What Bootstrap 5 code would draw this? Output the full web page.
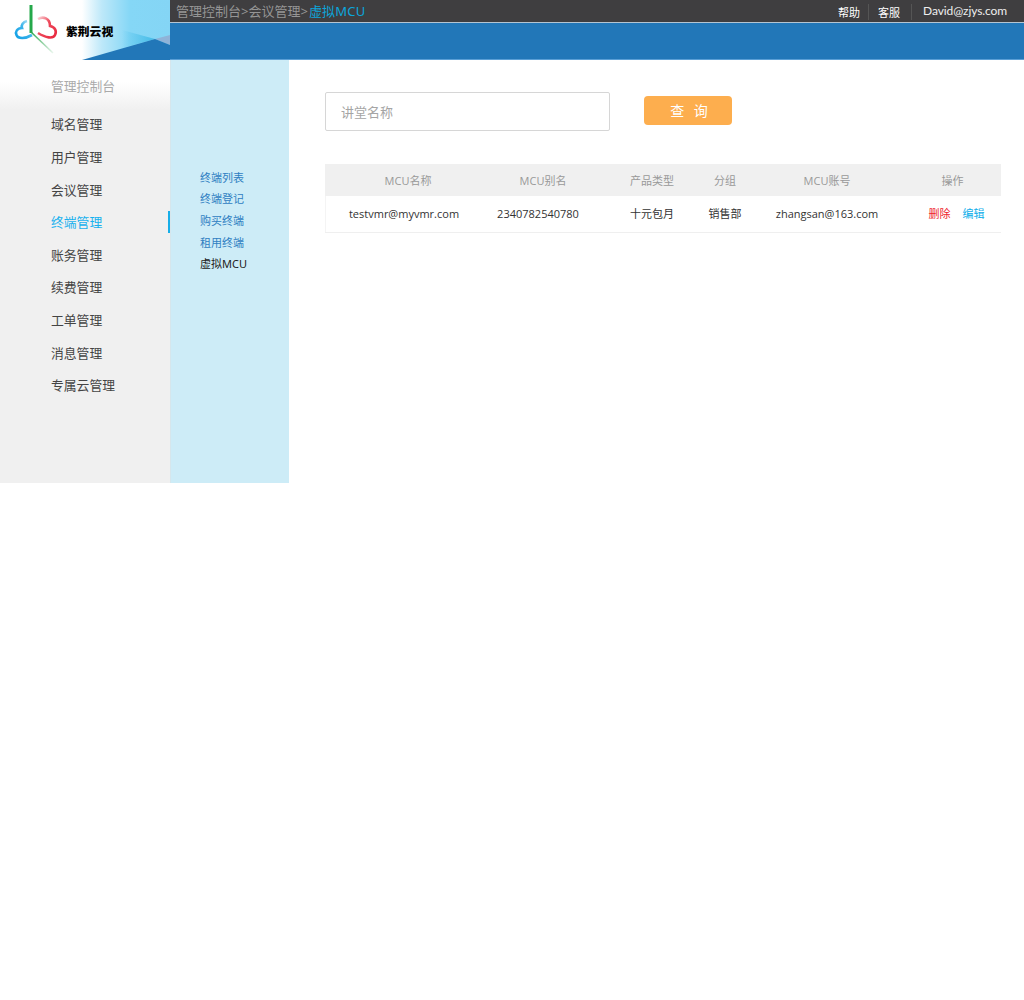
<!DOCTYPE html>
<html lang="zh-CN">
<head>
  <meta charset="UTF-8" />
  <meta name="viewport" content="width=device-width, initial-scale=1.0" />
  <title>虚拟MCU</title>
  <link href="https://cdn.jsdelivr.net/npm/bootstrap@5.3.0/dist/css/bootstrap.min.css" rel="stylesheet" />
  <style>
    body {
      font-family: "Open Sans", "Noto Sans CJK SC", sans-serif;
      font-size: 11px;
      color: #333;
      background: #fff;
    }
    /* header */
    .top-head { height: 60px; }
    .logo-box {
      width: 170px;
      position: relative;
      background: linear-gradient(90deg, #fff 82px, #bde8f9 102px, #85d7f6 130px, #84d5f5 170px);
      overflow: hidden;
    }
    .logo-decor { position: absolute; left: 0; top: 0; }
    .logo-name {
      position: absolute;
      left: 66px;
      top: 22px;
      font-family: "Noto Sans CJK SC", sans-serif;
      font-size: 11.8px;
      font-weight: 900;
      line-height: 18px;
      color: #000;
    }
    .head-right { flex: 1; }
    .crumb-bar {
      height: 23px;
      background: #3f3e40;
      border-bottom: 1px solid #b4c5d3;
      padding: 0 17px 0 6px;
    }
    .crumb {
      font-size: 13px;
      line-height: 22px;
      color: #959595;
      font-family: "Noto Sans", "Noto Sans CJK SC", sans-serif;
    }
    .crumb-now { color: #0ca6dc; letter-spacing: .2px; margin-left: 1px; }
    .bar-link { color: #fff; font-size: 11px; line-height: 22px; padding-top: 1px; font-family: "Noto Sans CJK SC", sans-serif; }
    .bar-sep { width: 1px; height: 16px; background: #555; margin: 2px 9px 0 8px; }
    .bar-sep-2 { margin: 2px 11px 0 11px; }
    .bar-mail { font-family: Lato, sans-serif; font-size: 12px; letter-spacing: -.1px; color: #eee; }
    .blue-bar {
      height: 37px;
      background: #2277b8;
      border-bottom: 1px solid #5a9fd6;
    }
    /* side menus */
    .side-wrap { height: 423px; }
    .main-menu {
      width: 170px;
      padding: 17px 0 0 51px;
      background: linear-gradient(180deg, #fff 0, #fff 22px, #f0f0f0 50px);
    }
    .menu-title { font-size: 12.8px; line-height: 18px; color: #aaa; margin-bottom: 13.4px; font-family: "Noto Sans CJK SC", sans-serif; }
    .main-link {
      position: relative;
      font-size: 12.8px;
      line-height: 32.6px;
      color: #444;
      padding: 0;
      font-family: "Noto Sans CJK SC", sans-serif;
    }
    .main-link:hover { color: #444; }
    .main-link.on { color: #17b1ee; }
    .main-link.on::after {
      content: "";
      position: absolute;
      left: 117px;
      top: 5px;
      width: 2px;
      height: 22px;
      background: #17aee8;
    }
    .sub-menu {
      width: 119px;
      padding: 106.5px 0 0 29px;
      background: #cdecf7;
      border-left: 1px solid #d6e6ec;
    }
    .sub-link {
      font-size: 11px;
      line-height: 21.75px;
      color: #2f80c2;
      padding: 0;
      font-family: "Noto Sans CJK SC", sans-serif;
    }
    .sub-link:hover { color: #2f80c2; }
    .sub-link.on { color: #222; margin-top: -1px; font-family: "Noto Sans", "Noto Sans CJK SC", sans-serif; }
    /* content */
    .content-box { padding: 32px 0 0 36px; width: 712px; }
    .search-input {
      width: 285px;
      height: 39px;
      border: 1px solid #d6d6d6;
      border-radius: 2px;
      padding: 0 15px;
      font-size: 13px;
      color: #333;
    }
    .search-input::placeholder { color: #a5a5a5; }
    .search-btn {
      width: 88px;
      height: 29px;
      margin: 4px 0 0 34px;
      padding: 0 0 0 2px;
      background: #fdae4e;
      border: 0;
      border-radius: 4px;
      color: #fff;
      font-size: 14px;
      line-height: 29px;
      word-spacing: 1.5px;
      font-family: "Noto Sans CJK SC", sans-serif;
    }
    .search-btn:hover { background: #fdae4e; color: #fff; }
    .mcu-table {
      width: 676px;
      table-layout: fixed;
      margin: 33px 0 0;
      font-size: 11px;
    }
    .mcu-table th {
      height: 32px;
      padding: 3px 0 0;
      background: #f0f0f0;
      color: #999;
      font-weight: 400;
      text-align: center;
      vertical-align: middle;
      border: 0;
    }
    .mcu-table td {
      height: 36px;
      padding: 0;
      color: #333;
      text-align: center;
      vertical-align: middle;
      border-bottom: 1px solid #efefef;
    }
    .mcu-table td.first-col { padding-left: 11px; box-shadow: inset 1px 0 0 #f4f4f4; }
    .mcu-table th.first-col { padding-left: 19px; }
    .mcu-table th.second-col { padding-left: 10px; }
    .row-ops { padding-left: 8px; gap: 12px; }
    .op-del { color: #ee1c2e; text-decoration: none; }
    .op-edit { color: #10aeea; text-decoration: none; }
  </style>
</head>
<body>
<header class="top-head d-flex">
  <div class="logo-box">
    <svg class="logo-decor" width="170" height="60" viewBox="0 0 170 60">
      <defs>
        <linearGradient id="bandFade" x1="0" x2="1" y1="0" y2="0">
          <stop offset="0" stop-color="#45bce8" stop-opacity="0" />
          <stop offset="1" stop-color="#45bce8" />
        </linearGradient>
        <linearGradient id="stemFade" x1="0" x2="1" y1="0" y2="1">
          <stop offset="0" stop-color="#2fa84f" />
          <stop offset="1" stop-color="#2fa84f" stop-opacity=".1" />
        </linearGradient>
        <linearGradient id="blueFade" x1="0" x2="1" y1="1" y2="0">
          <stop offset="0" stop-color="#12a0e6" />
          <stop offset=".55" stop-color="#3cb4ea" />
          <stop offset="1" stop-color="#3cb4ea" stop-opacity=".25" />
        </linearGradient>
        <linearGradient id="redFade" x1="1" x2="0" y1="1" y2="0">
          <stop offset="0" stop-color="#e8283e" />
          <stop offset=".6" stop-color="#ee4a5c" />
          <stop offset="1" stop-color="#ee4a5c" stop-opacity=".25" />
        </linearGradient>
      </defs>
      <polygon points="122,30 155,39 122,48" fill="url(#bandFade)" />
      <polygon points="155,39 170,35 170,45" fill="#8fb3d8" />
      <polygon points="82,60 155,39 170,45 170,60" fill="#2277b8" />
      <path d="M31 5V33" stroke="#25a84a" stroke-width="3" fill="none" />
      <path d="M31 32L53 53" stroke="url(#stemFade)" stroke-width="1.6" fill="none" />
      <path d="M27 21C23 22 21 25 22 28C17 28 15 32 16.500 35C18 39 25 39 32 35" stroke="url(#blueFade)" stroke-width="2.6" fill="none" />
      <path d="M38 19C43 16 50 18 50 26C55 27 57 31 55 35C53 39 46 38 38 33" stroke="url(#redFade)" stroke-width="2.6" fill="none" />
    </svg>
    <span class="logo-name">紫荆云视</span>
  </div>
  <div class="head-right">
    <div class="crumb-bar d-flex justify-content-between">
      <div class="crumb">管理控制台&gt;会议管理&gt;<span class="crumb-now">虚拟MCU</span></div>
      <div class="d-flex align-items-center">
        <span class="bar-link">帮助</span>
        <span class="bar-sep"></span>
        <span class="bar-link">客服</span>
        <span class="bar-sep bar-sep-2"></span>
        <span class="bar-mail">David@zjys.com</span>
      </div>
    </div>
    <div class="blue-bar"></div>
  </div>
</header>
<div class="side-wrap d-flex">
  <nav class="main-menu">
    <div class="menu-title">管理控制台</div>
    <div class="nav flex-column">
      <a class="nav-link main-link" href="#">域名管理</a>
      <a class="nav-link main-link" href="#">用户管理</a>
      <a class="nav-link main-link" href="#">会议管理</a>
      <a class="nav-link main-link on" href="#">终端管理</a>
      <a class="nav-link main-link" href="#">账务管理</a>
      <a class="nav-link main-link" href="#">续费管理</a>
      <a class="nav-link main-link" href="#">工单管理</a>
      <a class="nav-link main-link" href="#">消息管理</a>
      <a class="nav-link main-link" href="#">专属云管理</a>
    </div>
  </nav>
  <nav class="sub-menu nav flex-column flex-nowrap">
    <a class="nav-link sub-link" href="#">终端列表</a>
    <a class="nav-link sub-link" href="#">终端登记</a>
    <a class="nav-link sub-link" href="#">购买终端</a>
    <a class="nav-link sub-link" href="#">租用终端</a>
    <a class="nav-link sub-link on" href="#">虚拟MCU</a>
  </nav>
  <main class="content-box">
    <div class="d-flex align-items-start">
      <input class="form-control search-input" type="text" placeholder="讲堂名称" />
      <button class="btn search-btn" type="button">查&nbsp;&nbsp;询</button>
    </div>
    <table class="table mcu-table">
      <colgroup>
        <col style="width:147px" /><col style="width:132px" /><col style="width:96px" />
        <col style="width:50px" /><col style="width:154px" /><col style="width:97px" />
      </colgroup>
      <thead>
        <tr>
          <th class="first-col">MCU名称</th>
          <th class="second-col">MCU别名</th>
          <th>产品类型</th>
          <th>分组</th>
          <th>MCU账号</th>
          <th>操作</th>
        </tr>
      </thead>
      <tbody>
        <tr>
          <td class="first-col">testvmr@myvmr.com</td>
          <td>2340782540780</td>
          <td>十元包月</td>
          <td>销售部</td>
          <td>zhangsan@163.com</td>
          <td><div class="row-ops d-flex justify-content-center"><a class="op-del" href="#">删除</a><a class="op-edit" href="#">编辑</a></div></td>
        </tr>
      </tbody>
    </table>
  </main>
</div>
<script src="https://cdn.jsdelivr.net/npm/bootstrap@5.3.0/dist/js/bootstrap.bundle.min.js"></script>
</body>
</html>
